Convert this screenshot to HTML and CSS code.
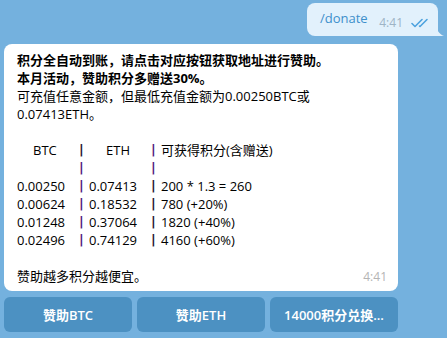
FILE: index.html
```html
<!DOCTYPE html>
<html lang="zh">
  <head>
    <meta charset="UTF-8" />
    <meta name="viewport" content="width=device-width, initial-scale=1.0" />
    <title>Donate</title>
    <link rel="stylesheet" href="styles.css">
  </head>
  <body>
    <div class="chat">
      <div class="row-out">
        <div class="bubble-out">
          <span class="cmd">/donate</span>
          <span class="meta-out">
            <span class="time-out">4:41</span>
            <svg class="ticks" width="19" height="10" viewBox="0 0 19 10">
              <path d="M1 5.5 L4 8.5 L11 1.5" fill="none" stroke="#4ea3df" stroke-width="1.6" stroke-linecap="round" stroke-linejoin="round"/>
              <path d="M8.5 8 L9 8.5 L16 1.5" fill="none" stroke="#4ea3df" stroke-width="1.6" stroke-linecap="round" stroke-linejoin="round"/>
            </svg>
          </span>
          <svg class="tail" width="8" height="14" viewBox="0 0 8 14">
            <path d="M0 0 C0 8 3 12 8 14 L0 14 Z" fill="#e2f1fc"/>
          </svg>
        </div>
      </div>

      <div class="msg-in">
        <div class="bubble-in">
          <p class="strong">积分全自动到账，请点击对应按钮获取地址进行赞助。<br>本月活动，赞助积分多赠送30%。</p>
          <p>可充值任意金额，但最低充值金额为0.00250BTC或<br>0.07413ETH。</p>

          <div class="table">
            <div class="trow">
              <span class="c1 head1">BTC</span><span class="pipe dark">|</span>
              <span class="c2 head2">ETH</span><span class="pipe">|</span>
              <span class="c3">可获得积分(含赠送)</span>
            </div>
            <div class="trow">
              <span class="c1"></span><span class="pipe">|</span>
              <span class="c2"></span><span class="pipe">|</span>
              <span class="c3"></span>
            </div>
            <div class="trow">
              <span class="c1">0.00250</span><span class="pipe">|</span>
              <span class="c2">0.07413</span><span class="pipe dark">|</span>
              <span class="c3">200 * 1.3 = 260</span>
            </div>
            <div class="trow">
              <span class="c1">0.00624</span><span class="pipe">|</span>
              <span class="c2">0.18532</span><span class="pipe dark">|</span>
              <span class="c3">780 (+20%)</span>
            </div>
            <div class="trow">
              <span class="c1">0.01248</span><span class="pipe">|</span>
              <span class="c2">0.37064</span><span class="pipe dark">|</span>
              <span class="c3">1820 (+40%)</span>
            </div>
            <div class="trow">
              <span class="c1">0.02496</span><span class="pipe">|</span>
              <span class="c2">0.74129</span><span class="pipe dark">|</span>
              <span class="c3">4160 (+60%)</span>
            </div>
          </div>

          <p class="last">赞助越多积分越便宜。</p>
          <span class="time-in">4:41</span>
        </div>

        <div class="keyboard">
          <button>赞助BTC</button>
          <button>赞助ETH</button>
          <button>14000积分兑换...</button>
        </div>
      </div>
    </div>
  </body>
</html>
```

FILE: styles.css
```css
body {
  margin: 0;
  padding: 0;
  font-family: "Open Sans", "Noto Sans CJK SC", sans-serif;
  font-size: 13px;
  background-color: #74b1de;
  color: #000;
}
.chat {
  padding-top: 3px;
}
.row-out {
  display: flex;
  justify-content: flex-end;
  padding-right: 9px;
}
.bubble-out {
  position: relative;
  background-color: #e2f1fc;
  border-radius: 8px 8px 0 8px;
  height: 33px;
  width: 131px;
  box-sizing: border-box;
  padding: 0 8px 0 13px;
  display: flex;
  align-items: center;
}
.cmd {
  color: #3d8fcb;
  font-size: 13px;
  margin-top: -3px;
}
.meta-out {
  margin-left: auto;
  display: flex;
  align-items: center;
  margin-top: 6px;
}
.time-out {
  color: #9eb4c6;
  font-size: 12px;
  margin-right: 8px;
}
.ticks {
  display: block;
}
.tail {
  position: absolute;
  right: -6px;
  bottom: 0;
}
.msg-in {
  margin: 8px 0 0 4px;
  width: 394px;
}
.bubble-in {
  position: relative;
  background-color: #fff;
  border-radius: 8px;
  padding: 7px 13px 6px 13px;
  line-height: 18px;
}
.bubble-in p {
  margin: 0;
}
.strong {
  font-weight: bold;
}
.table {
  margin-top: 18px;
}
.trow {
  display: flex;
  height: 18px;
}
.c1 {
  width: 63px;
}
.c2 {
  width: 63px;
}
.head1 {
  padding-left: 16px;
  box-sizing: border-box;
}
.head2 {
  padding-left: 17px;
  box-sizing: border-box;
}
.pipe {
  width: 10px;
  margin-left: -1px;
  font-family: "DejaVu Sans", sans-serif;
  font-weight: bold;
  font-size: 13px;
  color: #4f1a7c;
}
.pipe.dark {
  color: #1f1430;
}
.last {
  margin-top: 18px !important;
}
.time-in {
  position: absolute;
  right: 11px;
  bottom: 5px;
  color: #b4b4b4;
  font-size: 12px;
}
.keyboard {
  display: flex;
  gap: 5px;
  margin-top: 6px;
}
.keyboard button {
  flex: 1;
  height: 35px;
  border: none;
  border-radius: 6px;
  background-color: #4c91c2;
  color: #fff;
  font-family: "Open Sans", "Noto Sans CJK SC", sans-serif;
  font-size: 13px;
  font-weight: 600;
  cursor: pointer;
}
```
